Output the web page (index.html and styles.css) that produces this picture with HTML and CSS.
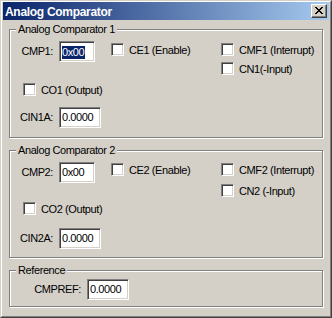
FILE: index.html
```html
<!DOCTYPE html>
<html>
<head>
<meta charset="utf-8">
<link rel="stylesheet" href="styles.css">
</head>
<body>
<div class="window">
  <div class="frame">
    <div class="caption">
      <span class="title">Analog Comparator</span>
      <span class="close">
        <svg width="8" height="7" viewBox="0 0 8 7"><path fill="#000" d="M0 0h2v1h-2zM6 0h2v1h-2zM1 1h2v1h-2zM5 1h2v1h-2zM2 2h4v1h-4zM3 3h2v1h-2zM2 4h4v1h-4zM1 5h2v1h-2zM5 5h2v1h-2zM0 6h2v1h-2zM6 6h2v1h-2z"/></svg>
      </span>
    </div>
    <div class="client">
      <div class="group">
        <div class="group-title">Analog Comparator 1</div>
        <div class="cmp-grid">
          <span class="lbl r1">CMP1:</span>
          <span class="edit w36 r1c2"><span class="sel">0x00</span></span>
          <span class="chk c3r1"><span class="box"></span><span class="txt">CE1 (Enable)</span></span>
          <span class="chk c4r1"><span class="box"></span><span class="txt">CMF1 (Interrupt)</span></span>
          <span class="chk c4r2"><span class="box"></span><span class="txt">CN1(-Input)</span></span>
          <span class="chk co"><span class="box"></span><span class="txt">CO1 (Output)</span></span>
          <span class="lbl r4">CIN1A:</span>
          <span class="edit w42 r4c2">0.0000</span>
        </div>
      </div>
      <div class="group tight">
        <div class="group-title">Analog Comparator 2</div>
        <div class="cmp-grid">
          <span class="lbl r1">CMP2:</span>
          <span class="edit w36 r1c2">0x00</span>
          <span class="chk c3r1"><span class="box"></span><span class="txt">CE2 (Enable)</span></span>
          <span class="chk c4r1"><span class="box"></span><span class="txt">CMF2 (Interrupt)</span></span>
          <span class="chk c4r2"><span class="box"></span><span class="txt">CN2 (-Input)</span></span>
          <span class="chk co"><span class="box"></span><span class="txt">CO2 (Output)</span></span>
          <span class="lbl r4">CIN2A:</span>
          <span class="edit w42 r4c2">0.0000</span>
        </div>
      </div>
      <div class="group ref">
        <div class="group-title">Reference</div>
        <div class="ref-grid">
          <span class="lbl">CMPREF:</span>
          <span class="edit w42">0.0000</span>
        </div>
      </div>
    </div>
  </div>
</div>
</body>
</html>
```

FILE: styles.css
```css
html, body {
  margin: 0;
  padding: 0;
  background: #d4d0c8;
}
body {
  font-family: "Liberation Sans", Arial, sans-serif;
  font-size: 11px;
  letter-spacing: -0.4px;
  color: #000;
}
.window {
  width: 332px;
  height: 318px;
  box-sizing: border-box;
  border: 1px solid;
  border-color: #d4d0c8 #404040 #404040 #d4d0c8;
  display: flex;
}
.frame {
  flex: 1;
  border: 1px solid;
  border-color: #fff #808080 #808080 #fff;
  padding: 0 1px 1px 1px;
  display: flex;
  flex-direction: column;
}
.caption {
  height: 18px;
  flex: none;
  background: linear-gradient(to right, #0a246a, #a6caf0);
  display: flex;
  align-items: center;
  justify-content: space-between;
  padding: 0 2px 0 2px;
}
.title {
  color: #fff;
  font-weight: bold;
  font-size: 12px;
  letter-spacing: -0.3px;
  line-height: 18px;
  padding-top: 1px;
}
.close {
  width: 16px;
  height: 14px;
  box-sizing: border-box;
  background: #d4d0c8;
  border: 1px solid;
  border-color: #fff #404040 #404040 #fff;
  box-shadow: inset -1px -1px #808080;
  display: flex;
  align-items: center;
  justify-content: center;
  padding: 0 1px 1px 0;
}
.close svg { display: block; }
.client {
  flex: 1;
  display: flex;
  flex-direction: column;
  gap: 12px;
  padding: 9px 6px 0 6px;
}
.group {
  border: 1px solid #808080;
  box-shadow: inset 1px 1px #fff, 1px 1px #fff;
  padding: 0 0 9px 6px;
}
.group.tight {
  padding-bottom: 8px;
}
.group.ref {
  padding-bottom: 6px;
}
.group-title {
  width: fit-content;
  margin-top: -7px;
  padding: 0 2px;
  line-height: 13px;
  background: #d4d0c8;
  white-space: nowrap;
}
.cmp-grid {
  display: grid;
  grid-template-columns: 43px 52px 110px 1fr;
  grid-template-rows: 21px 19px 26px 21px;
  margin-top: 5px;
}
.ref-grid {
  display: grid;
  grid-template-columns: 71px auto;
  margin-top: 2px;
}
.lbl {
  justify-self: end;
  align-self: center;
  padding-right: 6px;
  line-height: 13px;
  white-space: nowrap;
}
.r1 { grid-column: 1; grid-row: 1; }
.r4 { grid-column: 1; grid-row: 4; }
.r1c2 { grid-column: 2; grid-row: 1; }
.r4c2 { grid-column: 2; grid-row: 4; }
.c3r1 { grid-column: 3; grid-row: 1; margin-top: 2px; }
.c4r1 { grid-column: 4; grid-row: 1; margin-top: 2px; }
.c4r2 { grid-column: 4; grid-row: 2; }
.co { grid-column: 1 / span 3; grid-row: 3; margin-top: 2px; margin-left: 7px; }
.tight .c3r1, .tight .c4r1 { margin-top: 1px; }
.tight .c4r2 { margin-top: 1px; }
.tight .co { margin-top: 0; }
.edit {
  display: block;
  height: 21px;
  box-sizing: border-box;
  border: 1px solid;
  border-color: #808080 #fff #fff #808080;
  box-shadow: inset 1px 1px #404040, inset -1px -1px #d4d0c8;
  background: #fff;
  padding-left: 2px;
  line-height: 19px;
  white-space: nowrap;
  overflow: hidden;
}
.w36 { width: 36px; }
.w42 { width: 42px; }
.sel {
  display: inline-block;
  background: #0a246a;
  color: #fff;
  line-height: 13px;
  vertical-align: middle;
  padding-right: 1px;
}
.chk {
  display: flex;
  align-items: flex-start;
  gap: 5px;
  align-self: start;
  white-space: nowrap;
}
.box {
  width: 13px;
  height: 13px;
  flex: none;
  box-sizing: border-box;
  border: 1px solid;
  border-color: #808080 #fff #fff #808080;
  box-shadow: inset 1px 1px #404040, inset -1px -1px #d4d0c8;
  background: #fff;
}
.txt {
  line-height: 13px;
  margin-top: 1px;
}
```
